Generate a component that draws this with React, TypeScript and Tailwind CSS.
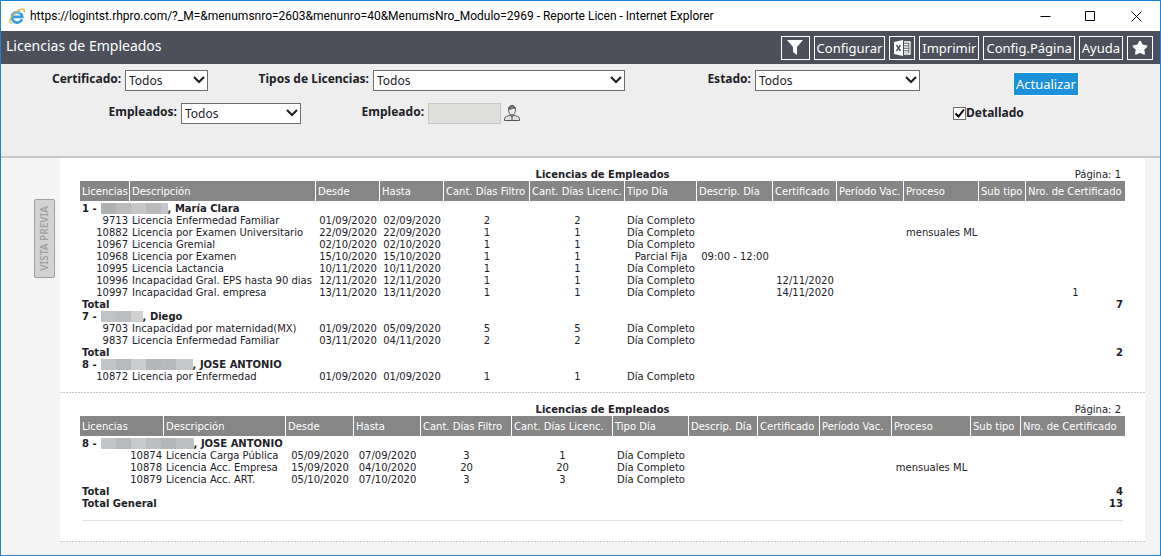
import React from "react";
import { Star } from "lucide-react";

type Column = { label: string; width: string };
type Group = { id: number; blocks: string[]; name: string; rows: string[][]; total?: number };

const PAGE_ONE: Column[] = [
  { label: "Licencias", width: "w-[50px]" },
  { label: "Descripción", width: "w-[186px]" },
  { label: "Desde", width: "w-[64px]" },
  { label: "Hasta", width: "w-[64px]" },
  { label: "Cant. Días Filtro", width: "w-[86px]" },
  { label: "Cant. Días Licenc.", width: "w-[95px]" },
  { label: "Tipo Día", width: "w-[72px]" },
  { label: "Descrip. Día", width: "w-[76px]" },
  { label: "Certificado", width: "w-[64px]" },
  { label: "Período Vac.", width: "w-[67px]" },
  { label: "Proceso", width: "w-[75px]" },
  { label: "Sub tipo", width: "w-[47px]" },
  { label: "Nro. de Certificado", width: "w-[99px]" },
];

const PAGE_TWO_WIDTHS = [
  "w-[84px]", "w-[122px]", "w-[68px]", "w-[67px]", "w-[91px]", "w-[101px]", "w-[76px]",
  "w-[69px]", "w-[62px]", "w-[72px]", "w-[79px]", "w-[50px]", "w-[104px]",
];
const PAGE_TWO: Column[] = PAGE_ONE.map((c, i) => ({ ...c, width: PAGE_TWO_WIDTHS[i] }));

const row = (
  id: string, desc: string, from: string, to: string, days: string, lic = days,
  kind = "Día Completo", kindDesc = "", cert = "", process = "", certNo = "",
) => [id, desc, from, to, days, lic, kind, kindDesc, cert, "", process, "", certNo];

const GROUPS_ONE: Group[] = [
  {
    id: 1,
    blocks: ["w-[15px] bg-[#afb0b2]", "w-[15px] bg-[#babbbd]", "w-[15px] bg-[#c5c6c8]", "w-[15px] bg-[#b9babc]", "w-[7px] bg-[#c4c5c7]"],
    name: "María Clara",
    rows: [
      row("9713", "Licencia Enfermedad Familiar", "01/09/2020", "02/09/2020", "2"),
      row("10882", "Licencia por Examen Universitario", "22/09/2020", "22/09/2020", "1", "1", "Día Completo", "", "", "mensuales ML"),
      row("10967", "Licencia Gremial", "02/10/2020", "02/10/2020", "1"),
      row("10968", "Licencia por Examen", "15/10/2020", "15/10/2020", "1", "1", "Parcial Fija", "09:00 - 12:00"),
      row("10995", "Licencia Lactancia", "10/11/2020", "10/11/2020", "1"),
      row("10996", "Incapacidad Gral. EPS hasta 90 dias", "12/11/2020", "12/11/2020", "1", "1", "Día Completo", "", "12/11/2020"),
      row("10997", "Incapacidad Gral. empresa", "13/11/2020", "13/11/2020", "1", "1", "Día Completo", "", "14/11/2020", "", "1"),
    ],
    total: 7,
  },
  {
    id: 7,
    blocks: ["w-[15px] bg-[#c1c2c4]", "w-[15px] bg-[#bdbec0]", "w-[12px] bg-[#d0d1d3]"],
    name: "Diego",
    rows: [
      row("9703", "Incapacidad por maternidad(MX)", "01/09/2020", "05/09/2020", "5"),
      row("9837", "Licencia Enfermedad Familiar", "03/11/2020", "04/11/2020", "2"),
    ],
    total: 2,
  },
  {
    id: 8,
    blocks: ["w-[15px] bg-[#c3c4c6]", "w-[15px] bg-[#b9babc]", "w-[15px] bg-[#cbccce]", "w-[15px] bg-[#b5b6b8]", "w-[15px] bg-[#b8b9bb]", "w-[17px] bg-[#c6c7c9]"],
    name: "JOSE ANTONIO",
    rows: [row("10872", "Licencia por Enfermedad", "01/09/2020", "01/09/2020", "1")],
  },
];

const GROUPS_TWO: Group[] = [
  {
    id: 8,
    blocks: ["w-[15px] bg-[#c3c4c6]", "w-[15px] bg-[#b9babc]", "w-[15px] bg-[#c8c9cb]", "w-[15px] bg-[#bdbec0]", "w-[15px] bg-[#b4b5b7]", "w-[18px] bg-[#bfc0c2]"],
    name: "JOSE ANTONIO",
    rows: [
      row("10874", "Licencia Carga Pública", "05/09/2020", "07/09/2020", "3", "1"),
      row("10878", "Licencia Acc. Empresa", "15/09/2020", "04/10/2020", "20", "20", "Día Completo", "", "", "mensuales ML"),
      row("10879", "Licencia Acc. ART.", "05/10/2020", "07/10/2020", "3"),
    ],
    total: 4,
  },
];

const cellAlign = (i: number) => (i === 0 ? "text-right" : i === 1 ? "text-left" : "text-center");

const TotalRow = ({ label, value }: { label: string; value: number }) => (
  <tr className="font-bold">
    <td colSpan={12} className="px-[2px]">{label}</td>
    <td className="px-[2px] text-right">{value}</td>
  </tr>
);

const ReportPage = ({ page, columns, groups, grandTotal }: {
  page: number; columns: Column[]; groups: Group[]; grandTotal?: number;
}) => (
  <section className="bg-white text-[10px] leading-[12px]">
    <div className="px-5 pt-[11px] pb-[9px]">
      <div className="grid grid-cols-[1fr_auto_1fr]">
        <h2 className="col-start-2 font-bold">Licencias de Empleados</h2>
        <span className="pr-1 text-right">Página: {page}</span>
      </div>
      <table className="w-full table-fixed border-collapse whitespace-nowrap">
        <colgroup>
          {columns.map((c) => <col key={c.label} className={c.width} />)}
        </colgroup>
        <thead>
          <tr>
            {columns.map((c) => (
              <th key={c.label} className="h-5 p-0 pr-px text-left font-normal text-white last:pr-0">
                <div className="h-5 bg-[#868686] pl-[2px] leading-[22px]">{c.label}</div>
              </th>
            ))}
          </tr>
        </thead>
        <tbody>
          <tr><td colSpan={13} className="h-[2px] p-0 leading-[0px]" /></tr>
          {groups.map((g) => (
            <React.Fragment key={g.id}>
              <tr>
                <td colSpan={13} className="px-[2px] font-bold">
                  <div className="flex h-3">
                    <span className="mr-[4px]">{g.id} -</span>
                    <span className="flex h-[11px]">
                      {g.blocks.map((b, i) => <i key={i} className={b} />)}
                    </span>
                    <span>, {g.name}</span>
                  </div>
                </td>
              </tr>
              {g.rows.map((r) => (
                <tr key={r[0]}>
                  {r.map((cell, i) => (
                    <td key={i} className={`h-3 px-[2px] py-0 ${cellAlign(i)}`}>{cell}</td>
                  ))}
                </tr>
              ))}
              {g.total !== undefined && <TotalRow label="Total" value={g.total} />}
            </React.Fragment>
          ))}
          {grandTotal !== undefined && <TotalRow label="Total General" value={grandTotal} />}
        </tbody>
      </table>
      {grandTotal !== undefined && <hr className="mx-[2px] mt-[10px] mb-[11px] border-[#e2e2e2]" />}
    </div>
    <div className="h-px bg-[repeating-linear-gradient(90deg,#c4c4c4_0_2px,#ffffff_2px_3px)]" />
  </section>
);

const LABEL = "mr-1 text-right whitespace-nowrap font-['Noto_Sans',sans-serif] text-[12px] leading-[18px] font-bold";

const SelectField = ({ id, label, labelWidth, width }: {
  id: string; label: string; labelWidth: string; width: string;
}) => (
  <div className="flex items-start">
    <label htmlFor={id} className={`${LABEL} ${labelWidth}`}>{label}</label>
    <div className={`relative ${width}`}>
      <select id={id} className="block h-[21px] w-full appearance-none border border-[#6d6d6d] bg-white pl-[3px] font-['Noto_Sans',sans-serif] text-[12px] leading-[19px]">
        <option>Todos</option>
      </select>
      <svg className="pointer-events-none absolute top-[6px] right-[3px] h-[8px] w-[12px]" viewBox="0 0 12 8" fill="none" stroke="#222" strokeWidth="2.200">
        <path d="M1 1l5 5 5-5" />
      </svg>
    </div>
  </div>
);

const ToolButton = ({ children, label, size }: { children: React.ReactNode; label?: string; size?: string }) => (
  <button type="button" aria-label={label} className={`flex h-6 items-center justify-center border border-white text-[13px] leading-[20px] ${size ?? "px-[2px]"}`}>
    {children}
  </button>
);

const IeLogo = () => (
  <svg className="h-4 w-4" viewBox="0 0 16 16" fill="none">
    <path d="M13 11.200A5.200 5.200 0 1 1 13.300 8.900H4" stroke="#2f9de2" strokeWidth="2.600" />
    <path d="M4.200 6.500A4.700 4.700 0 0 1 12 5.500" stroke="#7fd0f7" strokeWidth="1" />
    <path d="M3.200 14.600C-.4 16 .2 11.200 4 6.900 7.500 2.800 13.600-.5 15 1.400c.6.800.4 2.100-.2 3.300" stroke="#eeb440" strokeWidth="1.300" />
  </svg>
);

const ExcelIcon = () => (
  <svg className="h-4 w-[17px]" viewBox="0 0 17 16">
    <path d="M0 2l9-2v16l-9-2z" fill="#fff" />
    <path d="M10 2h6v12h-6" fill="none" stroke="#fff" strokeWidth="1.300" />
    <path d="M10 4.500h4.500M10 7h4.500M10 9.500h4.500M10 12h4.500" stroke="#fff" strokeWidth="1.300" />
    <path d="M2.500 5l4 6M6.500 5l-4 6" stroke="#4d505b" strokeWidth="1.400" />
  </svg>
);

const PersonIcon = () => (
  <svg className="h-4 w-4" viewBox="0 0 16 16" stroke="#555" strokeWidth="1">
    <path d="M.5 15.500v-2c0-2 3.500-2.500 5.500-3.500h4c2 1 5.500 1.500 5.500 3.500v2z" fill="#ddd" />
    <path d="M4.500 4.500C4.500-.5 11.500-.5 11.500 4.500c0 3-1.500 5.500-3.500 5.500s-3.500-2.500-3.500-5.500z" fill="#eee" />
    <path d="M4.500 4c2 .5 4-.5 5-1l2 1C11-.5 5-.5 4.500 4z" fill="#777" />
    <path d="M6 10l2 2 2-2M8 12v3.500" fill="none" />
  </svg>
);

export default function App() {
  return (
    <div className="flex min-h-screen flex-col border border-[#1883d7] bg-[#f4f4f4] font-['DejaVu_Sans',Verdana,sans-serif] text-[#212128]">
      <header className="flex h-[30px] items-center bg-white pl-2 font-['Roboto',sans-serif] text-[12px] text-black">
        <IeLogo />
        <h1 className="ml-[5px] whitespace-nowrap">https://logintst.rhpro.com/?_M=&amp;menumsnro=2603&amp;menunro=40&amp;MenumsNro_Modulo=2969 - Reporte Licen - Internet Explorer</h1>
        <div className="ml-auto flex items-center">
          <button type="button" aria-label="Minimizar" className="flex w-[45px] justify-center">
            <svg className="h-[11px] w-[11px]" viewBox="0 0 11 11" stroke="#000"><path d="M.5 5.500h10" /></svg>
          </button>
          <button type="button" aria-label="Maximizar" className="flex w-[45px] justify-center">
            <svg className="h-[11px] w-[11px]" viewBox="0 0 11 11" fill="none" stroke="#000"><path d="M.5.5h9v9h-9z" /></svg>
          </button>
          <button type="button" aria-label="Cerrar" className="flex w-[47px] justify-center">
            <svg className="h-[11px] w-[11px]" viewBox="0 0 11 11" stroke="#000"><path d="M.5.5l10 10M10.500.5l-10 10" /></svg>
          </button>
        </div>
      </header>

      <div className="flex h-[33px] items-center bg-[#4d505b] pr-[7px] pl-[5px] font-['Noto_Sans',sans-serif] text-white">
        <span className="pb-1 text-[14px]">Licencias de Empleados</span>
        <nav className="ml-auto flex gap-1">
          <ToolButton label="Filtrar" size="w-[29px]">
            <svg className="h-[15px] w-4" viewBox="0 0 16 15" fill="#fff"><path d="M0 0h16l-6 7v8l-4-3V7z" /></svg>
          </ToolButton>
          <ToolButton>Configurar</ToolButton>
          <ToolButton label="Excel" size="w-[26px]"><ExcelIcon /></ToolButton>
          <ToolButton>Imprimir</ToolButton>
          <ToolButton>Config.Página</ToolButton>
          <ToolButton>Ayuda</ToolButton>
          <ToolButton label="Favorito" size="w-[26px]"><Star className="h-4 w-4 fill-white" /></ToolButton>
        </nav>
      </div>

      <form className="flex h-[94px] border-b-2 border-[#c8c8c8] bg-[#eeeeee] pr-[81px] pl-[51px]">
        <div className="flex flex-col gap-3 pt-[6px]">
          <div className="flex gap-12">
            <SelectField id="certificado" label="Certificado:" labelWidth="w-[69px]" width="w-[83px]" />
            <SelectField id="tipos" label="Tipos de Licencias:" labelWidth="w-[113px]" width="w-[252px]" />
          </div>
          <div className="flex gap-[60px] pl-14">
            <SelectField id="empleados" label="Empleados:" labelWidth="w-[69px]" width="w-[120px]" />
            <div className="flex items-start">
              <label htmlFor="empleado" className={`${LABEL} w-[63px]`}>Empleado:</label>
              <input id="empleado" disabled className="h-[21px] w-[73px] border border-[#c8c8c8] bg-[#dfdfde]" />
              <button type="button" aria-label="Buscar empleado" className="ml-[3px] pt-[2px]"><PersonIcon /></button>
            </div>
          </div>
        </div>
        <div className="ml-auto flex gap-[33px] pt-[6px]">
          <SelectField id="estado" label="Estado:" labelWidth="w-[44px]" width="w-[165px]" />
          <div className="flex w-[126px] flex-col items-start pt-[2px]">
            <button type="button" className="h-6 self-end border border-white bg-[#1a91d8] px-[2px] font-['Noto_Sans',sans-serif] text-[13px] leading-[20px] text-white">Actualizar</button>
            <label className="mt-2 flex items-center font-['Noto_Sans',sans-serif] text-[12px] leading-[18px] font-bold">
              <span className="relative flex">
                <input type="checkbox" defaultChecked className="h-[13px] w-[13px] appearance-none border border-[#6d6d6d] bg-white" />
                <svg className="pointer-events-none absolute inset-0 h-[13px] w-[13px]" viewBox="0 0 13 13" fill="none" stroke="#000" strokeWidth="2"><path d="M2.500 6.500l3 3 5.500-7" /></svg>
              </span>
              Detallado
            </label>
          </div>
        </div>
      </form>

      <div className="flex flex-1 items-start">
        <aside className="flex w-[59px] justify-end pt-[41px] pr-[5px]">
          <button type="button" className="flex h-[79px] w-[21px] items-center justify-center rounded-[2px] border border-[#a0a0a0] bg-[#d3d3d3] font-['Noto_Sans',sans-serif] text-[10px] font-semibold text-[#a0a0a0]">
            <span className="rotate-180 whitespace-nowrap [writing-mode:vertical-rl]">VISTA PREVIA</span>
          </button>
        </aside>
        <main className="mr-[15px] min-w-0 flex-1">
          <ReportPage page={1} columns={PAGE_ONE} groups={GROUPS_ONE} />
          <ReportPage page={2} columns={PAGE_TWO} groups={GROUPS_TWO} grandTotal={13} />
        </main>
      </div>
    </div>
  );
}
